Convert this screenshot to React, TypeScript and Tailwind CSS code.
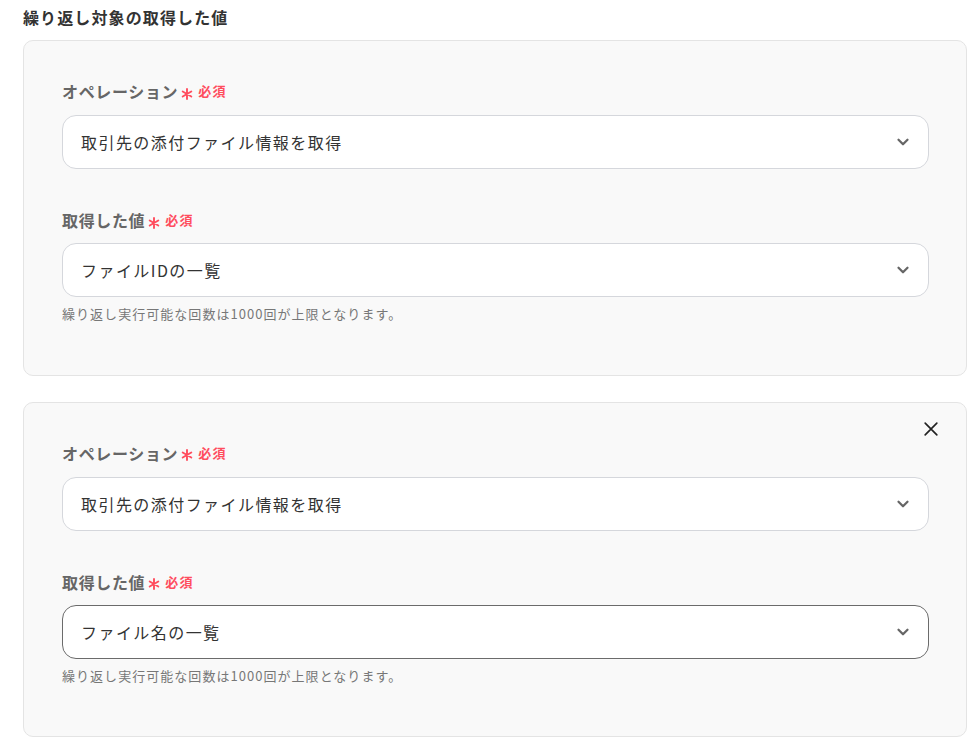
import React from 'react';

const font = { fontFamily: '"Noto Sans CJK JP", "Noto Sans", sans-serif' };

const Chevron = () => (
  <svg viewBox="0 0 24 24" className="w-[18px] h-[18px] text-[#666]" fill="none" stroke="currentColor" strokeWidth={3} strokeLinecap="round" strokeLinejoin="round">
    <path d="M6 9l6 6 6-6" />
  </svg>
);

const Asterisk = () => (
  <svg viewBox="0 0 12 12" className="w-[12px] h-[12px] mt-[5px] text-[#ff4d5e]" fill="none" stroke="currentColor" strokeWidth={1.9} strokeLinecap="round">
    <path d="M6 1v10M1.7 3.5l8.6 5M1.7 8.5l8.6-5" />
  </svg>
);

const Label: React.FC<{ text: string }> = ({ text }) => (
  <div className="flex items-center h-[22px]">
    <span className="text-[16px] font-bold text-[#666] tracking-[0.04em]">{text}</span>
    <span className="ml-[3px] flex"><Asterisk /></span>
    <span className="ml-[5px] text-[#ff4d5e] text-[13px] font-bold tracking-[0.1em]">必須</span>
  </div>
);

const Select: React.FC<{ value: string; focused?: boolean }> = ({ value, focused }) => (
  <div
    className={
      'flex items-center justify-between h-[54px] rounded-[14px] bg-white pl-[18px] pr-[16px] border ' +
      (focused ? 'border-[#6b6b6b]' : 'border-[#d5d7dc]')
    }
  >
    <span className="text-[16px] text-[#333] tracking-[0.09em]">{value}</span>
    <Chevron />
  </div>
);

const Card: React.FC<{ secondFocused?: boolean; closable?: boolean; second: string }> = ({ secondFocused, closable, second }) => (
  <div className="relative rounded-[10px] border border-[#e4e4e4] bg-[#f9f9f9] pl-[38px] pr-[37px] pt-[39px] pb-[51px]">
    {closable && (
      <button className="absolute top-[14px] right-[23px] p-[2px] text-[#222]">
        <svg viewBox="0 0 24 24" className="w-[20px] h-[20px]" fill="none" stroke="currentColor" strokeWidth={2} strokeLinecap="round">
          <path d="M5 5l14 14M19 5L5 19" />
        </svg>
      </button>
    )}
    <Label text="オペレーション" />
    <div className="mt-[13px]">
      <Select value="取引先の添付ファイル情報を取得" />
    </div>
    <div className="mt-[40px]">
      <Label text="取得した値" />
    </div>
    <div className="mt-[12px]">
      <Select value={second} focused={secondFocused} />
    </div>
    <p className="mt-[7px] text-[13px] text-[#777] tracking-[0.08em]">繰り返し実行可能な回数は1000回が上限となります。</p>
  </div>
);

export default function App() {
  return (
    <div className="w-[978px] h-[748px] bg-white overflow-hidden" style={font}>
      <div className="pl-[23px] pr-[11px] pt-[5px]">
        <h2 className="text-[16px] font-bold text-[#333] leading-[24px] tracking-[0.07em]">繰り返し対象の取得した値</h2>
        <div className="mt-[11px] flex flex-col gap-[26px]">
          <Card second="ファイルIDの一覧" />
          <Card second="ファイル名の一覧" closable secondFocused />
        </div>
      </div>
    </div>
  );
}
